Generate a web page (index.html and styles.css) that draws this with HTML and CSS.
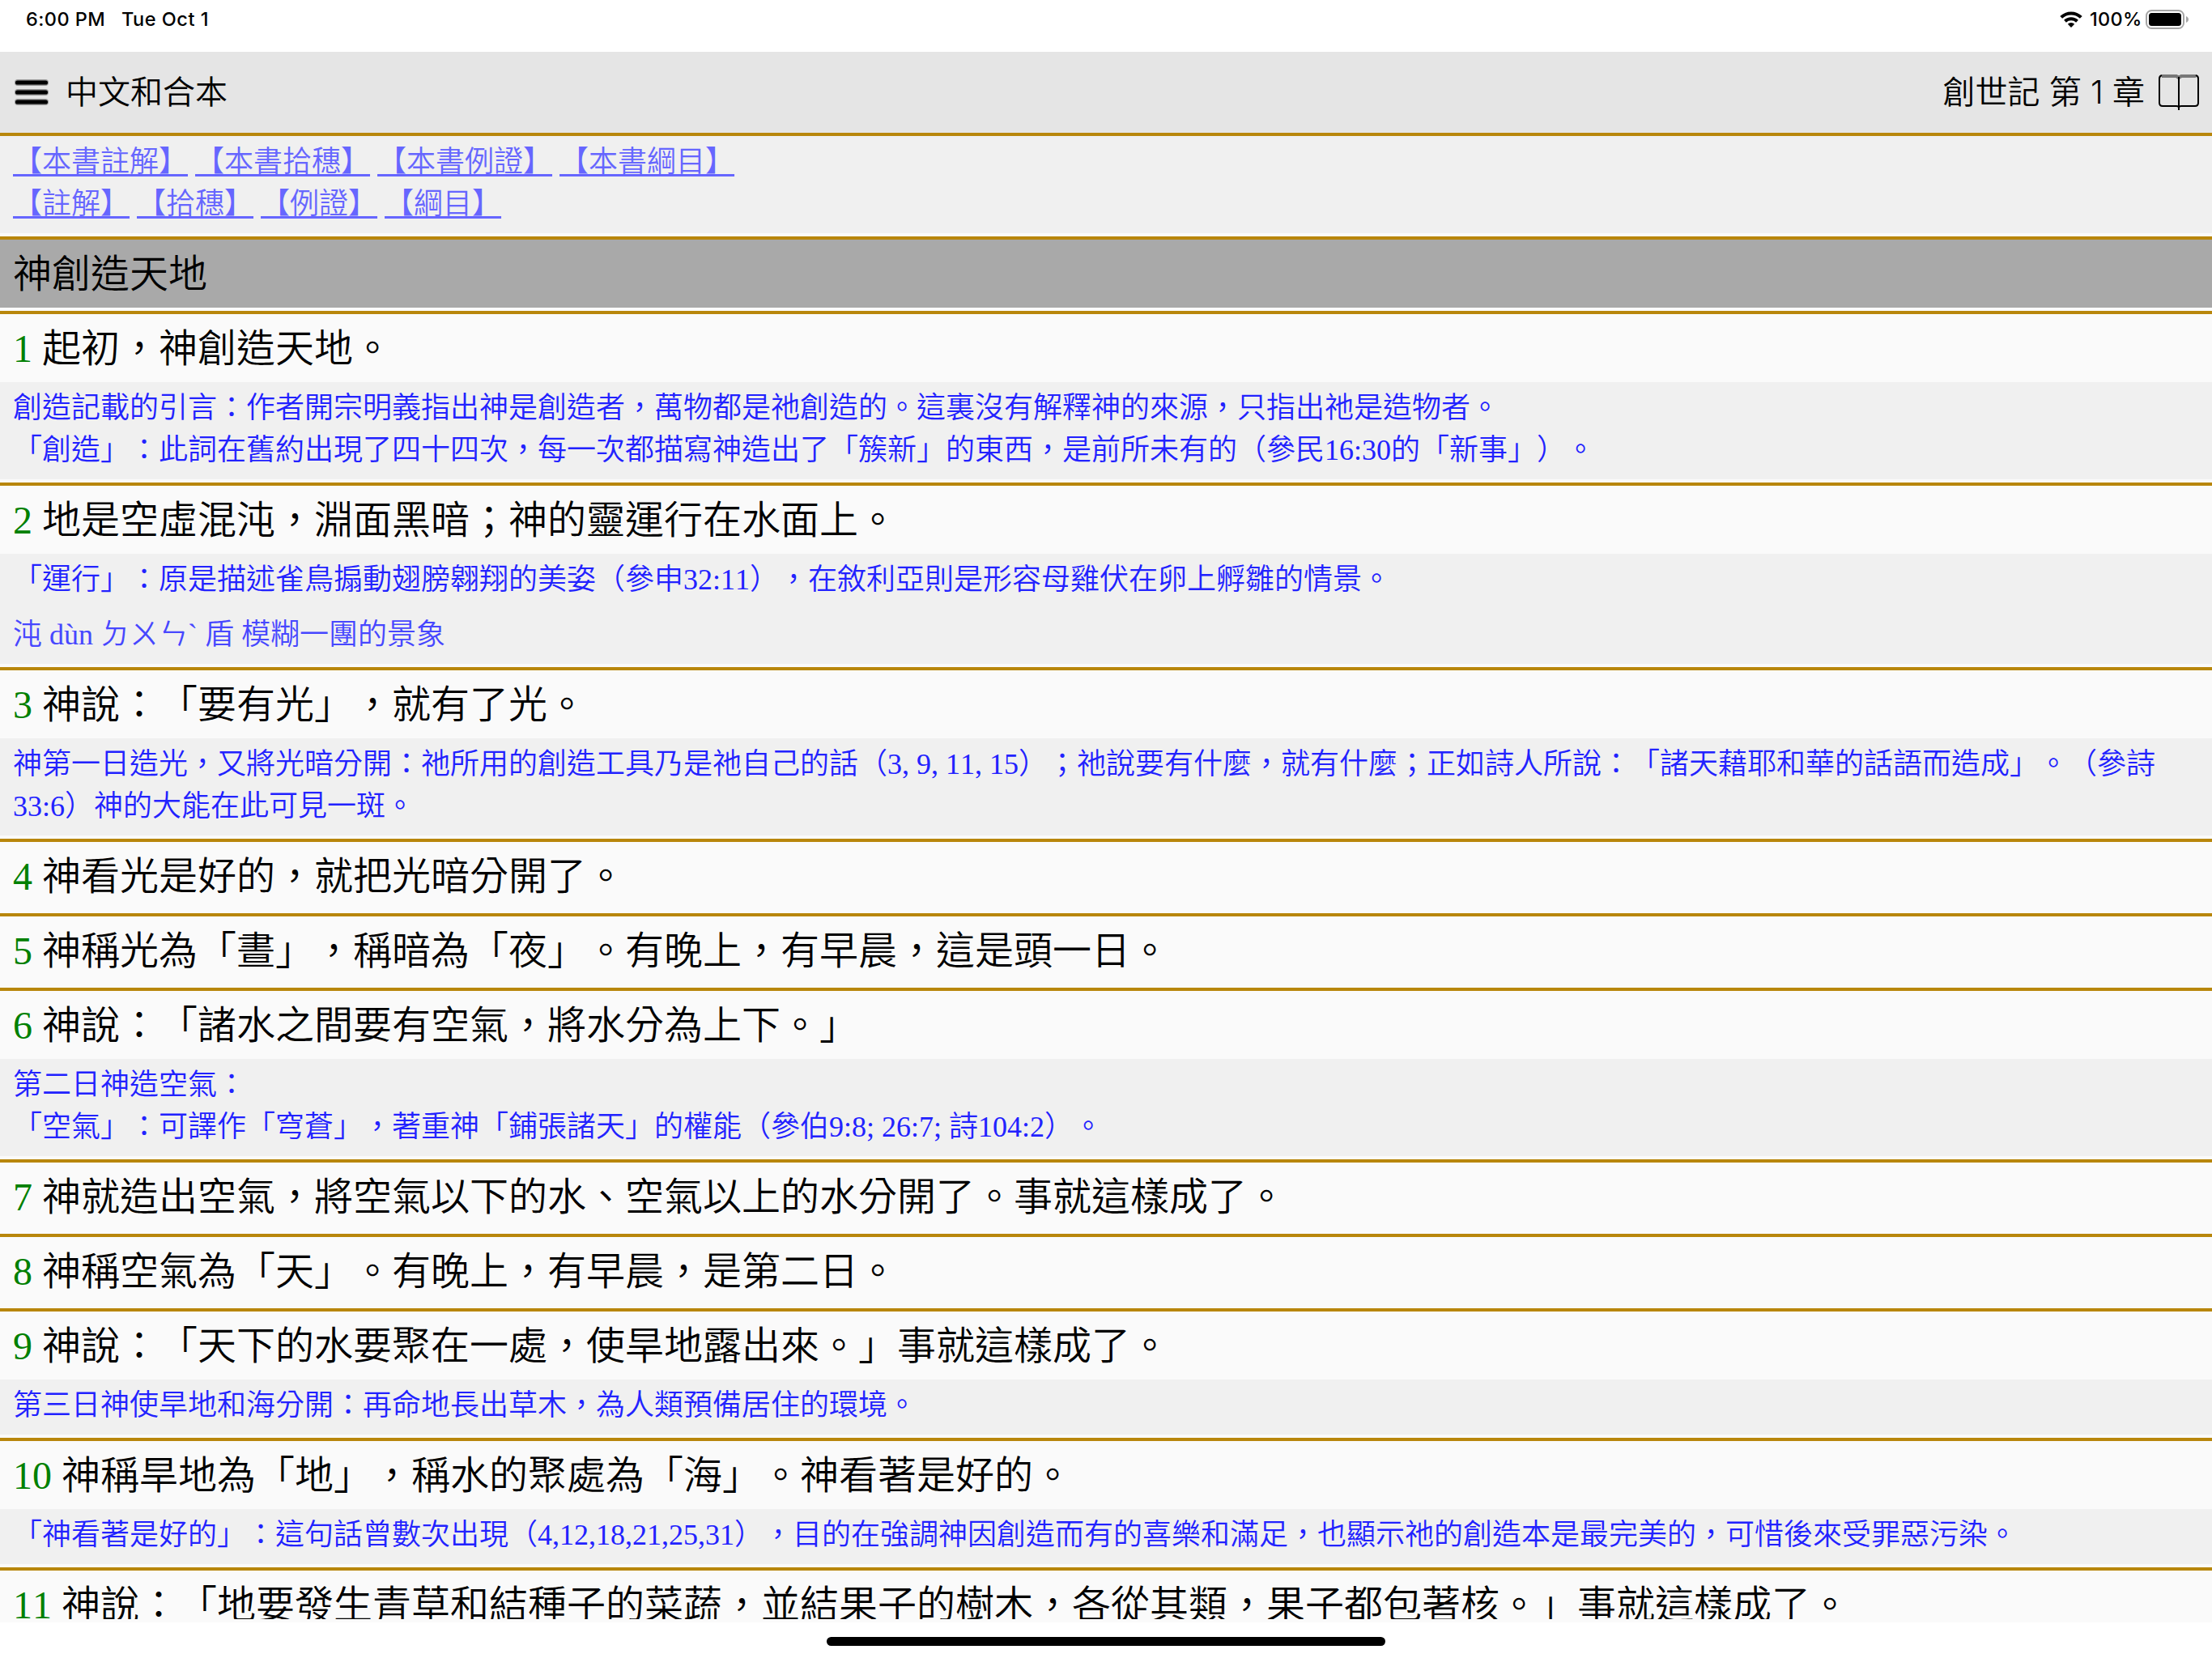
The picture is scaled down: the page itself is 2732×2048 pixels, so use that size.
FILE: index.html
```html
<!DOCTYPE html>
<html lang="zh-Hant">
<head>
  <meta charset="UTF-8" />
  <meta name="viewport" content="width=device-width, initial-scale=1.0"/>
  <title>中文和合本</title>
  <link rel="stylesheet" href="styles.css">
</head>
<body>
  <div class="status-bar">
    <span class="time">6:00 PM</span>
    <span class="date">Tue Oct 1</span>
    <svg class="wifi" width="28" height="20" viewBox="0 0 28 20">
      <g fill="none" stroke="#000" stroke-width="4">
        <path d="M1.7 7.4a17.6 17.6 0 0 1 24.6 0"/>
        <path d="M6.5 12.2a10.8 10.8 0 0 1 15 0"/>
      </g>
      <path d="M14 20l-4.2-4.3a6 6 0 0 1 8.4 0z"/>
    </svg>
    <span class="percent">100%</span>
    <svg class="battery" width="54" height="24" viewBox="0 0 54 24">
      <rect x="1" y="1" width="46" height="22" rx="6.5" fill="none" stroke="#a6a6a6" stroke-width="2"/>
      <rect x="4" y="4" width="40" height="16" rx="3.5"/>
      <path d="M50 8c4 1.5 4 6.5 0 8z" fill="#a6a6a6"/>
    </svg>
  </div>

  <header>
    <svg class="menu" width="44" height="34" viewBox="0 0 44 34">
      <g fill="#999">
        <rect x="1" y="1" width="42" height="8" rx="4"/>
        <rect x="1" y="13" width="42" height="8" rx="4"/>
        <rect x="1" y="25" width="42" height="8" rx="4"/>
      </g>
      <rect x="2" y="2.4" width="40" height="5.2" rx="2.6"/>
      <rect x="2" y="14.4" width="40" height="5.2" rx="2.6"/>
      <rect x="2" y="26.4" width="40" height="5.2" rx="2.6"/>
    </svg>
    <span class="version">中文和合本</span>
    <span class="chapter">創世記 第 1 章</span>
    <svg class="book" width="50" height="44" viewBox="0 0 50 44">
      <path d="M4 2h18l3 2 3-2h18" fill="none" stroke="#777" stroke-width="4"/>
      <path d="M1 5v30q0 4 4 4h17q3 0 3 2q0-2 3-2h17q4 0 4-4V5q0-3-3-4M1 5q0-3 3-4M25 3v41" fill="none" stroke="#000" stroke-width="2"/>
    </svg>
  </header>

  <main>
    <div class="row">
      <div class="note links">
        <a href="#">【本書註解】</a> <a href="#">【本書拾穗】</a> <a href="#">【本書例證】</a> <a href="#">【本書綱目】</a><br>
        <a href="#">【註解】</a> <a href="#">【拾穗】</a> <a href="#">【例證】</a> <a href="#">【綱目】</a>
      </div>
    </div>
    <div class="row">
      <h2>神創造天地</h2>
    </div>
    <div class="row">
      <p class="verse"><span class="num">1</span> 起初，神創造天地。</p>
      <p class="note">創造記載的引言：作者開宗明義指出神是創造者，萬物都是祂創造的。這裏沒有解釋神的來源，只指出祂是造物者。<br>「創造」：此詞在舊約出現了四十四次，每一次都描寫神造出了「簇新」的東西，是前所未有的（參民16:30的「新事」）。</p>
    </div>
    <div class="row">
      <p class="verse"><span class="num">2</span> 地是空虛混沌，淵面黑暗；神的靈運行在水面上。</p>
      <p class="note">「運行」：原是描述雀鳥搧動翅膀翱翔的美姿（參申32:11），在敘利亞則是形容母雞伏在卵上孵雛的情景。</p>
      <p class="note word">沌 dùn ㄉㄨㄣˋ 盾 模糊一團的景象</p>
    </div>
    <div class="row">
      <p class="verse"><span class="num">3</span> 神說：「要有光」，就有了光。</p>
      <p class="note">神第一日造光，又將光暗分開：祂所用的創造工具乃是祂自己的話（3, 9, 11, 15）；祂說要有什麼，就有什麼；正如詩人所說：「諸天藉耶和華的話語而造成」。（參詩33:6）神的大能在此可見一斑。</p>
    </div>
    <div class="row">
      <p class="verse"><span class="num">4</span> 神看光是好的，就把光暗分開了。</p>
    </div>
    <div class="row">
      <p class="verse"><span class="num">5</span> 神稱光為「晝」，稱暗為「夜」。有晚上，有早晨，這是頭一日。</p>
    </div>
    <div class="row">
      <p class="verse"><span class="num">6</span> 神說：「諸水之間要有空氣，將水分為上下。」</p>
      <p class="note">第二日神造空氣：<br>「空氣」：可譯作「穹蒼」，著重神「鋪張諸天」的權能（參伯9:8; 26:7; 詩104:2）。</p>
    </div>
    <div class="row">
      <p class="verse"><span class="num">7</span> 神就造出空氣，將空氣以下的水、空氣以上的水分開了。事就這樣成了。</p>
    </div>
    <div class="row">
      <p class="verse"><span class="num">8</span> 神稱空氣為「天」。有晚上，有早晨，是第二日。</p>
    </div>
    <div class="row">
      <p class="verse"><span class="num">9</span> 神說：「天下的水要聚在一處，使旱地露出來。」事就這樣成了。</p>
      <p class="note">第三日神使旱地和海分開：再命地長出草木，為人類預備居住的環境。</p>
    </div>
    <div class="row">
      <p class="verse"><span class="num">10</span> 神稱旱地為「地」，稱水的聚處為「海」。神看著是好的。</p>
      <p class="note">「神看著是好的」：這句話曾數次出現（4,12,18,21,25,31），目的在強調神因創造而有的喜樂和滿足，也顯示祂的創造本是最完美的，可惜後來受罪惡污染。</p>
    </div>
    <div class="row">
      <p class="verse"><span class="num">11</span> 神說：「地要發生青草和結種子的菜蔬，並結果子的樹木，各從其類，果子都包著核。」事就這樣成了。</p>
    </div>
  </main>

  <footer>
    <div class="home-indicator"></div>
  </footer>
</body>
</html>
```

FILE: styles.css
```css
* {
  box-sizing: border-box;
}

body {
  margin: 0;
  height: 100vh;
  display: flex;
  flex-direction: column;
  overflow: hidden;
  background: #fff;
  color: #000;
  font-family: "Liberation Serif", "Noto Sans CJK TC", serif;
  font-weight: 350;
  text-spacing-trim: space-all;
}

.status-bar {
  display: flex;
  align-items: center;
  flex: none;
  height: 64px;
  padding: 0 28px 16px 32px;
  font-family: Inter, sans-serif;
  font-size: 23.5px;
  font-weight: 450;
  line-height: 47px;
}

.status-bar span {
  height: 48px;
}

.time {
  width: 118px;
  letter-spacing: 0.45px;
}

.date {
  letter-spacing: 0.5px;
}

.wifi {
  margin-left: auto;
}

.percent {
  width: 64px;
  margin: 0 5px 0 9px;
  letter-spacing: 0.3px;
}

header {
  display: flex;
  align-items: center;
  flex: none;
  height: 100px;
  padding: 0 16px 0 18px;
  background: #e5e5e5;
  font-family: Inter, "Noto Sans CJK TC", sans-serif;
  font-size: 40px;
  line-height: 100px;
}

.menu {
  margin-left: -1px;
}

.version {
  margin-left: 20px;
}

.chapter {
  margin-left: auto;
}

.book {
  margin-left: 17px;
}

main {
  flex: none;
  height: 1840px;
  overflow: clip;
  background: #fafafa;
  border-bottom: 4px solid #fafafa;
  font-kerning: none;
}

.row {
  border-top: 4px solid #b8860b;
  padding-bottom: 4px;
}

h2,
.verse {
  margin: 0;
  height: 84px;
  padding: 1px 16px 0;
  font-size: 48px;
  font-weight: 350;
  line-height: 84px;
  white-space: nowrap;
}

h2 {
  background: #a9a9a9;
}

.num {
  color: #008000;
}

.note {
  margin: 0;
  padding: 6px 16px 10px;
  background: #f0f0f0;
  color: #2222ff;
  font-size: 36px;
  line-height: 52px;
}

.word {
  color: #4747ff;
}

.links a {
  color: #6666ff;
  text-decoration: underline;
  text-decoration-thickness: 3px;
  text-decoration-skip-ink: none;
  text-underline-offset: 3px;
}

footer {
  display: flex;
  justify-content: center;
  flex: none;
  height: 44px;
  padding-top: 18px;
}

.home-indicator {
  width: 690px;
  height: 11px;
  border-radius: 6px;
  background: #000;
}
```
